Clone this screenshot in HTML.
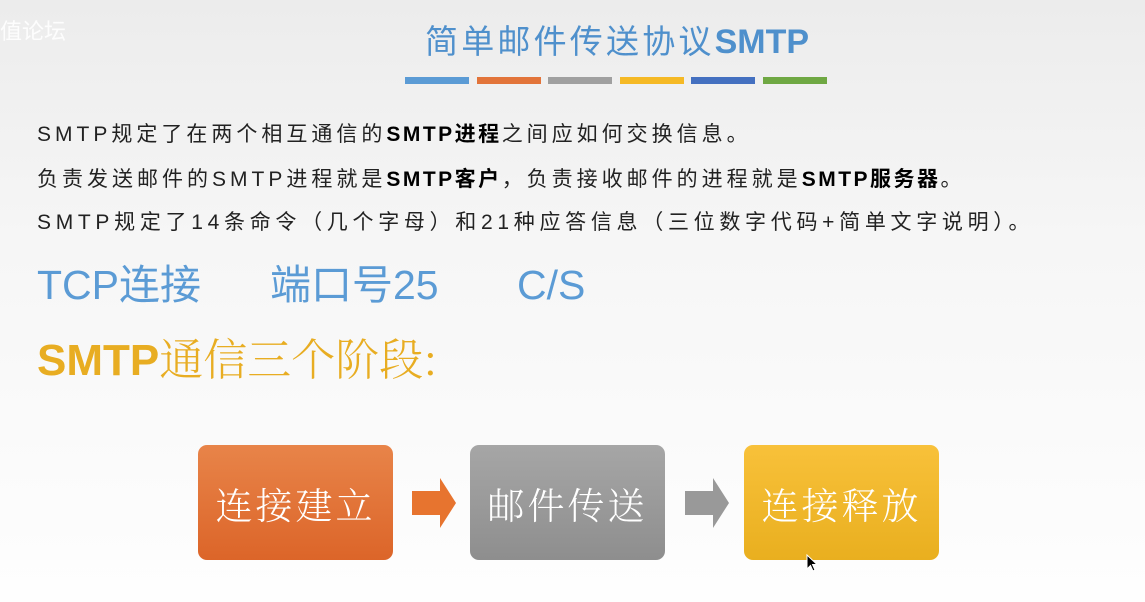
<!DOCTYPE html>
<html><head><meta charset="utf-8"><style>
html,body{margin:0;padding:0}
body{width:1145px;height:602px;overflow:hidden;position:relative;background:linear-gradient(#ececec 0%,#f6f6f6 40%,#fefefe 100%);font-family:"Liberation Sans","Noto Sans CJK SC",sans-serif}
.a{position:absolute;white-space:nowrap}
.t{left:425px;top:15px;font-size:33px;color:#4f90cc;letter-spacing:3.2px;font-weight:normal}
.t b{font-weight:bold;letter-spacing:0;font-size:34px}
.bar{position:absolute;top:77px;height:7px;width:64px}
.l{left:37px;font-size:21px;line-height:26px;color:#222;letter-spacing:4px}
.l b{font-weight:bold;color:#000;letter-spacing:2.5px}
.big{font-size:41px;line-height:50px;color:#5b9bd5;top:260px}
.box{position:absolute;top:445px;width:195px;height:115px;border-radius:9px;color:#fff;font-size:37px;display:flex;align-items:center;justify-content:center;letter-spacing:3px;font-family:"Noto Serif CJK SC","Liberation Serif",serif;font-weight:300}
</style></head><body>
<div class="a" style="left:0;top:14px;font-size:22px;color:#fff;opacity:.9">值论坛</div>
<div class="a t">简单邮件传送协议<b>SMTP</b></div>
<div class="bar" style="left:405px;background:#5b9bd5"></div>
<div class="bar" style="left:477px;background:#e2743a"></div>
<div class="bar" style="left:548px;background:#a0a0a0"></div>
<div class="bar" style="left:620px;background:#f5b925"></div>
<div class="bar" style="left:691px;background:#4470c0"></div>
<div class="bar" style="left:763px;background:#6fa843"></div>
<div class="a l" style="top:122px">SMTP规定了在两个相互通信的<b>SMTP进程</b>之间应如何交换信息。</div>
<div class="a l" style="top:167px">负责发送邮件的SMTP进程就是<b>SMTP客户</b>，负责接收邮件的进程就是<b>SMTP服务器</b>。</div>
<div class="a l" style="top:210px;letter-spacing:4.7px">SMTP规定了14条命令（几个字母）和21种应答信息（三位数字代码+简单文字说明）。</div>
<div class="a big" style="left:37px">TCP连接</div>
<div class="a big" style="left:270px">端口号25</div>
<div class="a big" style="left:517px">C/S</div>
<div class="a" style="left:37px;top:330px;font-size:44px;line-height:52px;color:#e8ad22"><span style="font-weight:bold">SMTP</span><span style="font-family:'Noto Serif CJK SC',serif;font-weight:300">通信三个阶段:</span></div>
<div class="box" style="left:198px;background:linear-gradient(#e88449,#dc6529)">连接建立</div>
<div class="box" style="left:470px;background:linear-gradient(#a6a6a6,#8e8e8e)">邮件传送</div>
<div class="box" style="left:744px;background:linear-gradient(#f8c13a,#e9af1f)">连接释放</div>
<svg class="a" style="left:412px;top:478px" width="44" height="50"><path d="M0 13H28V0L44 25L28 50V37H0Z" fill="#e7742f"/></svg>
<svg class="a" style="left:685px;top:478px" width="44" height="50"><path d="M0 13H28V0L44 25L28 50V37H0Z" fill="#999"/></svg>
<svg class="a" style="left:806px;top:554px" width="12" height="18"><path d="M1 1V15L4.5 11.5L7 17L9 16L6.5 10.5H11Z" fill="#000" stroke="#fff" stroke-width="1"/></svg>
</body></html>
